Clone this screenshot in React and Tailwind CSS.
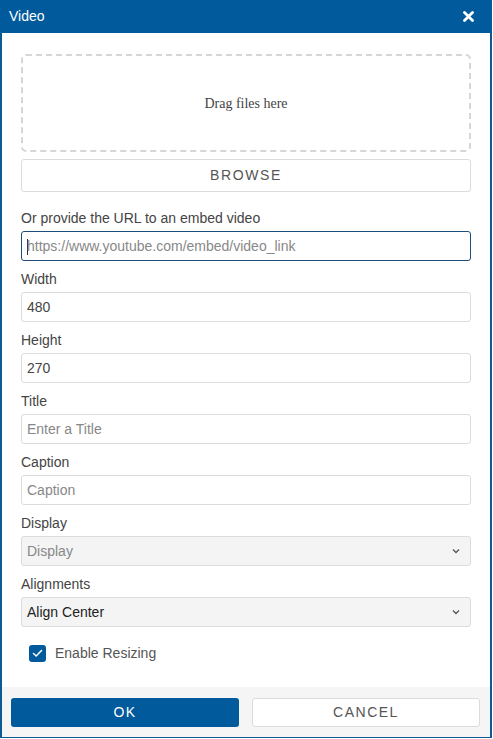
import React from 'react';

function Field({ label, placeholder, value, focused }) {
  return (
    <div className="flex flex-col">
      <label className="h-[20px] leading-[20px] text-[14px] text-[#444] mb-[3px]">{label}</label>
      <div
        className={
          'h-[30px] rounded-[3px] border px-[5px] flex items-center text-[14px] ' +
          (focused ? 'border-[#1d4e79]' : 'border-[#dcdcdc]')
        }
      >
        {value ? (
          <span className="text-[#444]">{value}</span>
        ) : (
          <span className="text-[#888]">
            {focused && <span className="inline-block w-px h-[16px] bg-[#333] align-middle -mr-px"></span>}
            {placeholder}
          </span>
        )}
      </div>
    </div>
  );
}

function SelectBox({ label, text, muted }) {
  return (
    <div className="flex flex-col">
      <label className="h-[20px] leading-[20px] text-[14px] text-[#444] mb-[3px]">{label}</label>
      <div className="h-[30px] rounded-[3px] border border-[#dcdcdc] bg-[#f4f4f4] pl-[5px] pr-[10px] flex items-center justify-between text-[14px]">
        <span className={muted ? 'text-[#888]' : 'text-[#222]'}>{text}</span>
        <svg width="8" height="6" viewBox="0 0 8 6">
          <path d="M1 1.5 L4 4.5 L7 1.5" fill="none" stroke="#555" strokeWidth="1.3" />
        </svg>
      </div>
    </div>
  );
}

export default function App() {
  return (
    <div className="w-[493px] h-[739px] bg-white" style={{ fontFamily: '"Liberation Sans", Arial, sans-serif' }}>
      <div className="w-[492px] h-[738px] border-x-2 border-b border-[#0c5a93] flex flex-col">
        <div className="h-[33px] bg-[#005a9c] flex items-center justify-between pl-[9px] pr-[18px] -mx-[2px]">
          <span className="text-white text-[14px]">Video</span>
          <svg width="11" height="11" viewBox="0 0 11 11">
            <path d="M1.5 1.5 L9.5 9.5 M9.5 1.5 L1.5 9.5" stroke="white" strokeWidth="2.8" strokeLinecap="round" />
          </svg>
        </div>

        <div className="flex-1 flex flex-col px-[19px] pt-[21px]">
          <div className="h-[98px] border-2 border-dashed border-[#d6d6d6] rounded-[5px] flex items-center justify-center">
            <span className="text-[14px] text-[#444]" style={{ fontFamily: '"Liberation Serif", "Times New Roman", serif' }}>
              Drag files here
            </span>
          </div>
          <div className="mt-[7px] h-[33px] border border-[#dcdcdc] rounded-[3px] flex items-center justify-center text-[14px] tracking-[1.6px] text-[#555]">
            BROWSE
          </div>

          <div className="mt-[16px] flex flex-col gap-[8px]">
            <Field label="Or provide the URL to an embed video" placeholder="https://www.youtube.com/embed/video_link" focused />
            <Field label="Width" value="480" />
            <Field label="Height" value="270" />
            <Field label="Title" placeholder="Enter a Title" />
            <Field label="Caption" placeholder="Caption" />
            <SelectBox label="Display" text="Display" muted />
            <SelectBox label="Alignments" text="Align Center" />
          </div>

          <div className="mt-[16px] flex items-center pl-[8px]">
            <div className="w-[17px] h-[17px] rounded-[3px] bg-[#005a9c] flex items-center justify-center">
              <svg width="11" height="9" viewBox="0 0 11 9">
                <path d="M1.5 4.5 L4.2 7 L9.5 1.5" fill="none" stroke="white" strokeWidth="1.6" strokeLinecap="round" strokeLinejoin="round" />
              </svg>
            </div>
            <span className="ml-[9px] text-[14px] text-[#555]">Enable Resizing</span>
          </div>
        </div>

        <div className="h-[50px] bg-[#f5f5f5] flex items-center gap-[13px] px-[9px]">
          <div className="w-[228px] h-[29px] bg-[#005a9c] rounded-[3px] flex items-center justify-center text-white text-[14px] tracking-[1.5px]">
            OK
          </div>
          <div className="w-[228px] h-[29px] bg-white border border-[#dcdcdc] rounded-[3px] flex items-center justify-center text-[#555] text-[14px] tracking-[1.5px]">
            CANCEL
          </div>
        </div>
      </div>
    </div>
  );
}
